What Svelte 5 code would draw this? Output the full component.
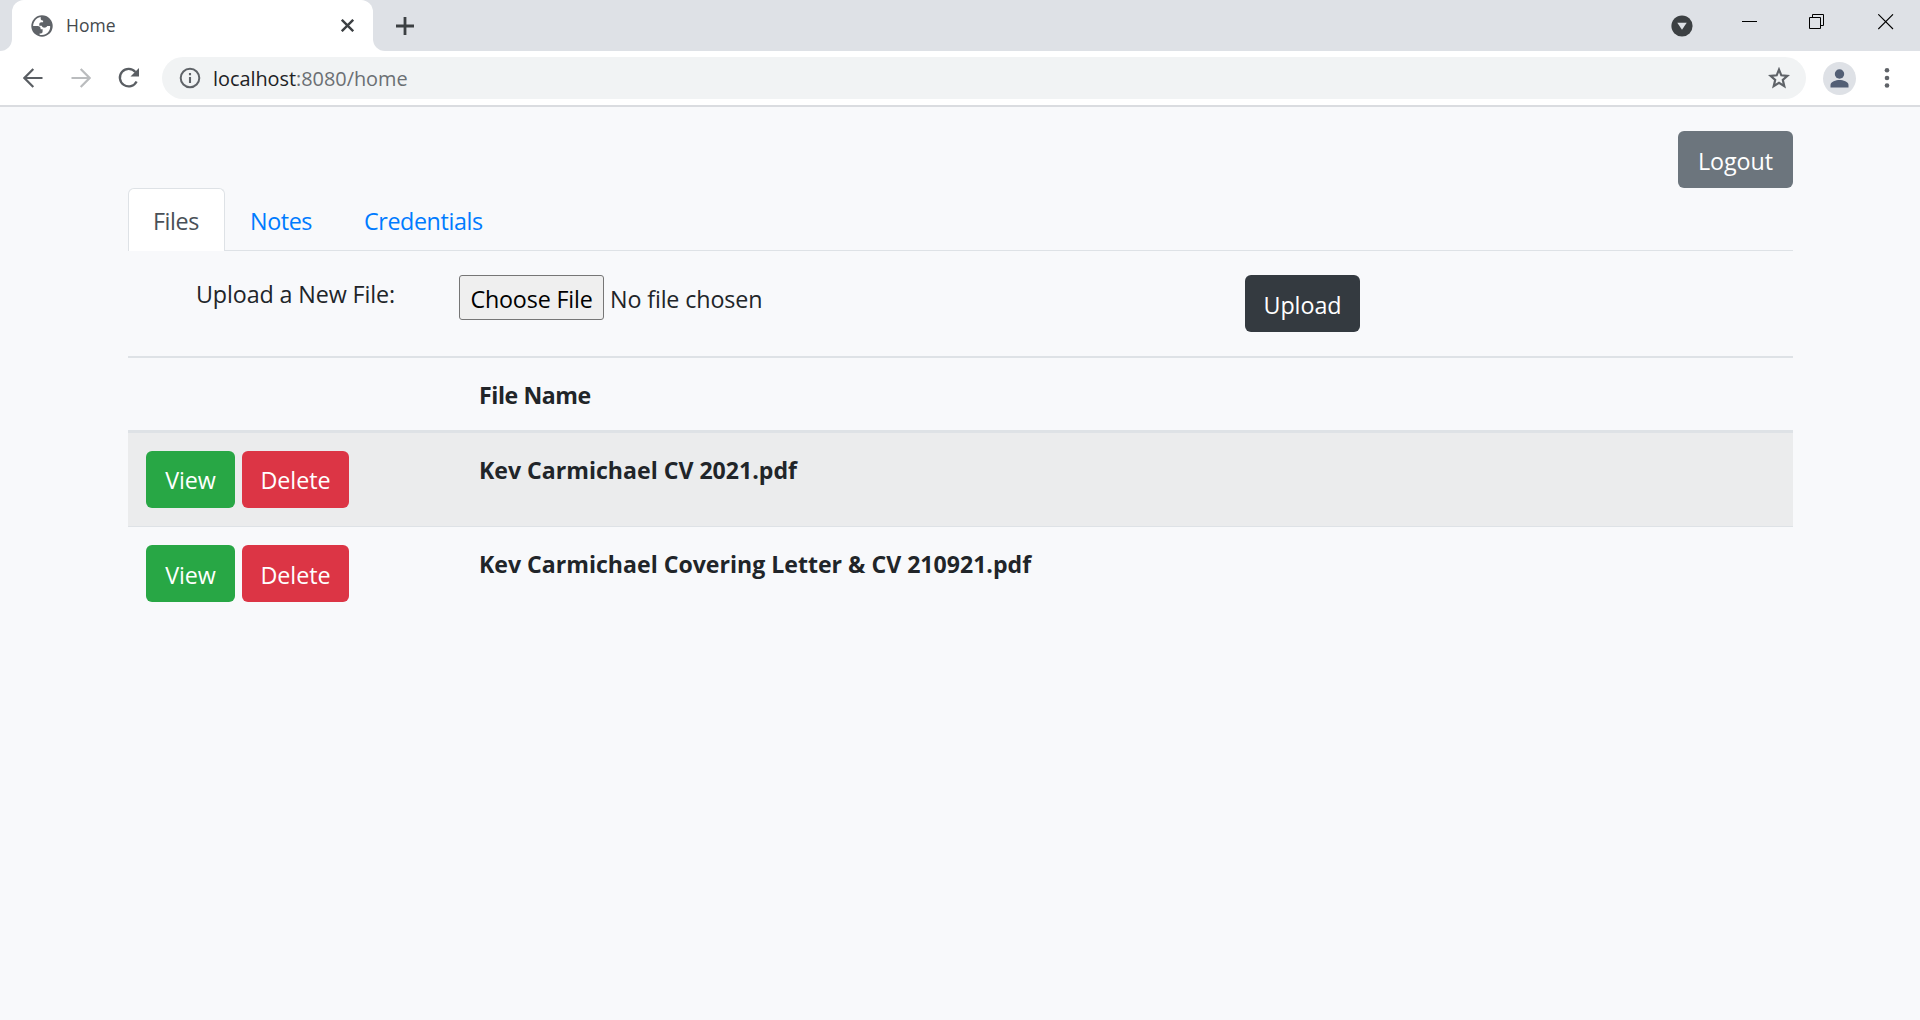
<script>
  const tabs = ['Files', 'Notes', 'Credentials'];
  let active = $state('Files');
  const files = [
    'Kev Carmichael CV 2021.pdf',
    'Kev Carmichael Covering Letter & CV 210921.pdf'
  ];
</script>

<div class="browser">
  <header class="tabstrip">
    <div class="left-edge"><i></i></div>
    <div class="tab">
      <svg class="globe" width="22" height="22" viewBox="0 0 22 22">
        <circle cx="11" cy="11" r="10.7" fill="#5f6368" />
        <path fill="#fff" d="M9.7 2.1c-2.4.4-4.7 1.8-6 3.9C2.600 7.600 2.100 9.300 2.100 11h4.600c1.700 0 2.900 1.100 2.900 2.500v.8h2v2.200c0 1.200-.7 1.900-1.800 1.900H8.600v1.300c3.600 1 7.500-.6 9.400-3.800 1-1.600 1.300-3.300 1.100-5l-2.800.1c-.9 1.300-2 1.800-3.400 1.600-1.100-.2-1.900-.8-2.200-1.900H8.300V9.500c0-1.300.8-2.200 2.100-2.200h1.700V5.500c-1.500 0-2.400-.8-2.400-2.100z" />
      </svg>
      <span class="title">Home</span>
      <svg class="close" width="13" height="13" viewBox="0 0 13 13"><path d="M.8.8l11.400 11.400M12.200.8L.8 12.200" stroke="#3c4043" stroke-width="2.400" /></svg>
    </div>
    <div class="rest">
      <svg class="plus" width="18" height="18" viewBox="0 0 18 18"><path d="M9 0v18M0 9h18" stroke="#3c4043" stroke-width="2.800" /></svg>
      <svg class="chev" width="22" height="22" viewBox="0 0 22 22"><circle cx="11" cy="11" r="10.600" fill="#3c4043" /><path d="M6.300 7.800h9.400L11 14.800z" fill="#dee1e6" /></svg>
      <svg class="min" width="16" height="16" viewBox="0 0 16 16"><path d="M0 7.500h15" stroke="#000" /></svg>
      <svg class="restore" width="16" height="16" viewBox="0 0 16 16"><path d="M.5 3.500h11v11H.5zM3.500 3.500v-3h11v11h-3" fill="none" stroke="#000" /></svg>
      <svg class="quit" width="16" height="16" viewBox="0 0 16 16"><path d="M.3.300l14.700 14.700M15 .3L.3 15" stroke="#000" stroke-width="1.100" /></svg>
    </div>
  </header>

  <div class="toolbar">
    <svg class="back" width="20" height="20" viewBox="0 0 20 20"><path d="M19.500 10H1.500M10.300 1L1.400 10l8.900 9" fill="none" stroke="#5a5e63" stroke-width="2.200" /></svg>
    <svg class="fwd" width="20" height="20" viewBox="0 0 20 20"><path d="M.5 10h18M9.700 1l8.900 9-8.900 9" fill="none" stroke="#babcbe" stroke-width="2.200" /></svg>
    <svg class="reload" width="22" height="22" viewBox="0 0 22 22"><path d="M18.600 14.400A8.800 8.800 0 1 1 17.400 4.900" fill="none" stroke="#5a5e63" stroke-width="2.300" /><path d="M21 1v8.500h-8.500z" fill="#5a5e63" /></svg>
    <div class="omnibox">
      <svg class="info" width="22" height="22" viewBox="0 0 22 22"><circle cx="11" cy="11" r="9.300" fill="none" stroke="#5f6368" stroke-width="2" /><path d="M11 10v6M11 6v2.200" stroke="#5f6368" stroke-width="2.100" /></svg>
      <span class="url">localhost<em>:8080/home</em></span>
      <svg class="star" width="22" height="22" viewBox="0 0 22 22"><path d="M11 2.600l2.300 5.700 6.200.5-4.700 4.100 1.500 6.300-5.300-3.300-5.300 3.300 1.500-6.300-4.700-4.100 6.200-.5z" fill="none" stroke="#5f6368" stroke-width="2.200" /></svg>
    </div>
    <svg class="avatar" width="33" height="33" viewBox="0 0 33 33"><circle cx="16.500" cy="16.500" r="16.500" fill="#dee1e6" /><circle cx="16.500" cy="12" r="4.700" fill="#535f75" /><path d="M7.500 25.500v-2.600c0-3.300 5.500-4.900 9-4.900s9 1.600 9 4.900v2.600z" fill="#535f75" /></svg>
    <svg class="dots" width="6" height="22" viewBox="0 0 6 22"><g fill="#5f6368"><circle cx="3" cy="3.300" r="2.300" /><circle cx="3" cy="11" r="2.300" /><circle cx="3" cy="18.500" r="2.300" /></g></svg>
  </div>

  <main>
    <div class="logout"><button class="btn grey">Logout</button></div>
    <nav>
      {#each tabs as t}
        <button class="link" class:active={active === t} onclick={() => (active = t)}>{t}</button>
      {/each}
    </nav>
    <form class="upload" onsubmit={(e) => e.preventDefault()}>
      <span class="label">Upload a New File:</span>
      <div class="picker"><button type="button" class="choose">Choose File</button><span>No file chosen</span></div>
      <button class="btn dark">Upload</button>
    </form>
    <section class="table">
      <div class="row head"><strong>File Name</strong></div>
      {#each files as name}
        <div class="row">
          <div class="actions">
            <button class="btn green">View</button>
            <button class="btn red">Delete</button>
          </div>
          <strong>{name}</strong>
        </div>
      {/each}
    </section>
  </main>
</div>

<style>
  :global(body) { margin: 0; background: #f8f9fa; }
  .browser { height: 1020px; overflow: hidden; background: #f8f9fb; font: 23.3px/36px "Open Sans", "Noto Sans", sans-serif; color: #212529; }
  svg { display: block; flex: none; }
  button { font: inherit; margin: 0; box-sizing: border-box; white-space: nowrap; }

  .tabstrip { display: flex; height: 51px; background: #fff; }
  .left-edge { width: 12px; background: #fff; }
  .left-edge i { display: block; height: 51px; background: #dee1e6; border-bottom-right-radius: 12px; }
  .tab { display: flex; width: 361px; box-sizing: border-box; background: linear-gradient(#dee1e6 0 14px, #fff 14px); position: relative; z-index: 0; }
  .tab::before { content: ""; position: absolute; z-index: -1; inset: 0; background: #fff; border-radius: 12px 12px 0 0; }
  .globe { margin: 15px 0 0 19px; }
  .title { margin: 7px 0 0 13px; font-size: 17.500px; color: #45494d; }
  .close { margin: 19px 19px 0 auto; }
  .rest { display: flex; flex: 1; background: #dee1e6; border-bottom-left-radius: 12px; }
  .plus { margin: 17px 0 0 23px; }
  .chev { margin: 14.500px 0 0 auto; }
  .min { margin: 14px 0 0 48.500px; }
  .restore { margin: 14px 0 0 51.500px; }
  .quit { margin: 14px 26px 0 53px; }

  .toolbar { display: flex; align-items: center; height: 54px; background: #fff; border-bottom: 2px solid #dadce0; }
  .back { margin-left: 23px; }
  .fwd { margin-left: 28px; }
  .reload { margin-left: 27px; }
  .omnibox { display: flex; align-items: center; flex: 1; height: 42px; margin-left: 22px; border-radius: 21px; background: #f1f3f4; }
  .info { margin-left: 16.500px; }
  .url { margin: 1px 0 0 12.500px; font-size: 19.900px; letter-spacing: -0.030px; color: #202124; }
  .url em { font-style: normal; color: #6b6f73; }
  .star { margin: 0 16px 0 auto; }
  .avatar { margin-left: 17px; }
  .dots { margin: 0 30px 0 28px; }

  main { width: 1665px; margin: 24px 0 0 128px; }
  .btn { height: 57px; padding: 3px 0 0; border: 0; border-radius: 6px; color: #fff; flex: none; letter-spacing: -0.050px; }
  .grey { width: 115px; background: #6c757d; }
  .dark { width: 115px; background: #343a40; }
  .green { width: 89px; background: #28a745; }
  .red { width: 107px; background: #dc3545; }
  .logout { display: flex; justify-content: flex-end; height: 57px; }

  nav { display: flex; height: 63px; box-shadow: inset 0 -1px #dee2e6; }
  .link { width: 114px; padding: 15px 0 12px 25px; border: 0; background: none; color: #007bff; letter-spacing: -0.400px; text-align: left; }
  .link.active { width: 97px; padding: 14px 0 12px 24px; color: #495057; background: #fff; border: 1px solid #dee2e6; border-bottom: 0; border-radius: 6px 6px 0 0; }

  .upload { display: grid; grid-template-columns: 263px 786px 115px; align-items: start; padding: 24px 0 24px 68px; height: 57px; }
  .label { padding-top: 1px; letter-spacing: -0.120px; }
  .picker { display: flex; align-items: center; height: 45px; }
  .choose { width: 145px; height: 45px; padding: 2px 0 0; border: 1px solid #767676; border-radius: 3px; background: #efefef; color: #000; letter-spacing: -0.180px; }
  .picker span { margin-left: 6px; padding-top: 2px; letter-spacing: -0.140px; }

  .row { display: grid; grid-template-columns: 332px 1fr; padding: 18px; border-top: 1px solid #dee2e6; height: 57px; align-items: start; }
  .row:nth-child(2) { border-top: 3px solid #dee2e6; background: #ebeced; }
  .row:nth-child(2) .btn { padding-top: 1px; }
  .head { border-top-width: 2px; height: 36px; }
  .row strong { grid-column: 2; padding: 1px 0 0 1px; font-size: 23.100px; }
  .head strong { letter-spacing: -0.400px; }
  .actions { display: flex; gap: 7px; }
</style>
